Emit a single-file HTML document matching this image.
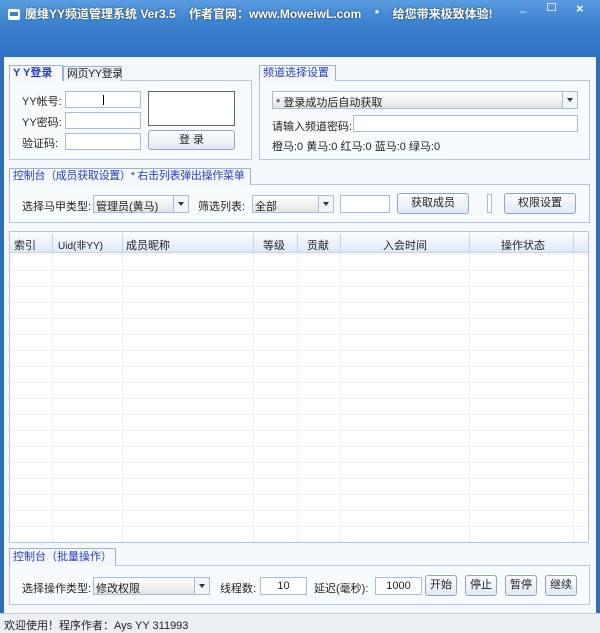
<!DOCTYPE html>
<html><head><meta charset="utf-8"><style>
*{box-sizing:border-box;margin:0;padding:0}
body{width:600px;height:633px;overflow:hidden;font-family:"Liberation Sans","Noto Sans CJK SC",sans-serif;font-size:11px;color:#222;background:#2d6fb8;position:relative;white-space:nowrap}
.a{position:absolute}
.title{left:0;top:0;width:600px;height:58px;background:linear-gradient(180deg,#5a9ce0 0%,#3d82d0 40%,#2f70c0 100%)}
.title .t{left:25px;top:5px;color:#fff;font-weight:bold;font-size:12px;white-space:nowrap;text-shadow:0 0 2px #234}
.body{left:4px;top:57px;width:592px;height:556px;background:#f4f8fc}
.tab{background:#f4f8fc;border:1px solid #9db3cc;border-bottom:none;color:#2a3cbf;padding-left:3px;line-height:15px;font-size:11px;overflow:hidden}
.panel{border:1px solid #b7c6d8;background:#f8fbfe}
.in{background:#fff;border:1px solid #a8bcd2}
.btn{border:1px solid #8fa6c1;border-radius:3px;background:linear-gradient(#fbfcfe,#e3eaf3);text-align:center;line-height:18px}
.lbl{white-space:nowrap}
.combo{border:1px solid #a8bcd2;background:linear-gradient(#fff,#e4e4e4)}
.dd{position:absolute;right:0;top:0;width:15px;height:100%;border-left:1px solid #a8bcd2;background:#f2f5f9}
.dd:after{content:"";position:absolute;left:4px;top:6px;border:3px solid transparent;border-top:4px solid #333}
.status{left:0;top:613px;width:600px;height:20px;background:#eceff3;border-top:1px solid #c7ccd3;padding:3px 4px;font-size:11px}
</style></head><body>
<div class="a title"><div class="a" style="left:8px;top:9px;width:12px;height:11px;background:#fff;border-radius:2px"><div style="margin:3px 2px;height:4px;background:#3a7fd6"></div></div>
<div class="a t">魔维YY频道管理系统 Ver3.5&nbsp;&nbsp;&nbsp; 作者官网：www.MoweiwL.com&nbsp;&nbsp;&nbsp; *&nbsp;&nbsp;&nbsp; 给您带来极致体验!</div>
<div class="a" style="left:520px;top:4px;color:#dde;font-size:12px">–</div>
<div class="a" style="left:547px;top:3px;width:9px;height:8px;border:1px solid #dde"></div>
<div class="a" style="left:576px;top:1px;color:#fff;font-size:13px;font-weight:bold">×</div>
</div>
<div class="a body"></div>

<div class="a panel" style="left:9px;top:80px;width:243px;height:80px"></div>
<div class="a tab" style="left:9px;top:65px;width:54px;height:16px;font-weight:bold">Y Y登录</div>
<div class="a tab" style="left:63px;top:66px;width:59px;height:15px;color:#222;background:#eef2f7;letter-spacing:-0.5px">网页YY登录</div>
<div class="a lbl" style="left:22px;top:93px">YY帐号:</div>
<div class="a lbl" style="left:22px;top:114px">YY密码:</div>
<div class="a lbl" style="left:22px;top:135px">验证码:</div>
<div class="a in" style="left:65px;top:91px;width:76px;height:17px"><div class="a" style="left:37px;top:3px;width:1px;height:10px;background:#000"></div></div>
<div class="a in" style="left:65px;top:112px;width:76px;height:17px"></div>
<div class="a in" style="left:65px;top:133px;width:76px;height:17px"></div>
<div class="a in" style="left:148px;top:91px;width:87px;height:35px;border-color:#666"></div>
<div class="a btn" style="left:148px;top:130px;width:87px;height:20px">登 录</div>

<div class="a panel" style="left:259px;top:80px;width:331px;height:80px"></div>
<div class="a tab" style="left:259px;top:65px;width:77px;height:16px">频道选择设置</div>
<div class="a combo" style="left:272px;top:91px;width:306px;height:18px"><span style="position:absolute;left:3px;top:2px">* 登录成功后自动获取</span><div class="dd"></div></div>
<div class="a lbl" style="left:272px;top:118px">请输入频道密码:</div>
<div class="a in" style="left:353px;top:115px;width:225px;height:17px"></div>
<div class="a lbl" style="left:272px;top:138px;font-size:11px">橙马:0 黄马:0 红马:0 蓝马:0 绿马:0</div>

<div class="a panel" style="left:9px;top:184px;width:581px;height:39px"></div>
<div class="a tab" style="left:9px;top:168px;width:242px;height:17px;letter-spacing:-0.3px">控制台（成员获取设置）* 右击列表弹出操作菜单</div>
<div class="a lbl" style="left:22px;top:198px">选择马甲类型:</div>
<div class="a combo" style="left:93px;top:195px;width:96px;height:18px"><span style="position:absolute;left:2px;top:2px">管理员(黄马)</span><div class="dd"></div></div>
<div class="a lbl" style="left:198px;top:198px">筛选列表:</div>
<div class="a combo" style="left:252px;top:195px;width:82px;height:18px"><span style="position:absolute;left:2px;top:2px">全部</span><div class="dd"></div></div>
<div class="a in" style="left:340px;top:195px;width:50px;height:18px"></div>
<div class="a btn" style="left:397px;top:193px;width:72px;height:21px">获取成员</div>
<div class="a" style="left:487px;top:194px;width:5px;height:19px;border:1px solid #a8bcd2;background:#fff"></div>
<div class="a btn" style="left:504px;top:193px;width:72px;height:21px">权限设置</div>

<div class="a" style="left:9px;top:231px;width:580px;height:312px;background:#fff;border:1px solid #b7c6d8;
background-image:linear-gradient(#eef1f5 1px,transparent 1px);background-size:100% 16px;background-position:0 22px"></div>
<div class="a" style="left:10px;top:232px;width:578px;height:21px;background:linear-gradient(#fdfeff,#dde9f6);border-bottom:1px solid #c4d3e4"></div>
<svg class="a" style="left:9px;top:234px" width="580" height="308"><g stroke="#c4d3e4"><line x1="43.5" y1="0" x2="43.5" y2="18"/><line x1="113.5" y1="0" x2="113.5" y2="18"/><line x1="244.5" y1="0" x2="244.5" y2="18"/><line x1="288.5" y1="0" x2="288.5" y2="18"/><line x1="331.5" y1="0" x2="331.5" y2="18"/><line x1="460.5" y1="0" x2="460.5" y2="18"/><line x1="564.5" y1="0" x2="564.5" y2="18"/></g>
<g stroke="#eef1f5"><line x1="43.5" y1="19" x2="43.5" y2="308"/><line x1="113.5" y1="19" x2="113.5" y2="308"/><line x1="244.5" y1="19" x2="244.5" y2="308"/><line x1="288.5" y1="19" x2="288.5" y2="308"/><line x1="331.5" y1="19" x2="331.5" y2="308"/><line x1="460.5" y1="19" x2="460.5" y2="308"/><line x1="564.5" y1="19" x2="564.5" y2="308"/></g></svg>
<div class="a lbl" style="left:14px;top:237px">索引</div>
<div class="a lbl" style="left:58px;top:237px;font-size:10px">Uid(非YY)</div>
<div class="a lbl" style="left:126px;top:237px">成员昵称</div>
<div class="a lbl" style="left:263px;top:237px">等级</div>
<div class="a lbl" style="left:307px;top:237px">贡献</div>
<div class="a lbl" style="left:383px;top:237px">入会时间</div>
<div class="a lbl" style="left:501px;top:237px">操作状态</div>

<div class="a panel" style="left:9px;top:565px;width:581px;height:40px"></div>
<div class="a tab" style="left:9px;top:548px;width:107px;height:18px;line-height:16px">控制台（批量操作）</div>
<div class="a lbl" style="left:22px;top:580px">选择操作类型:</div>
<div class="a combo" style="left:93px;top:577px;width:117px;height:18px"><span style="position:absolute;left:2px;top:2px">修改权限</span><div class="dd"></div></div>
<div class="a lbl" style="left:220px;top:580px">线程数:</div>
<div class="a in" style="left:260px;top:577px;width:47px;height:18px;text-align:center;line-height:16px">10</div>
<div class="a lbl" style="left:314px;top:580px">延迟(毫秒):</div>
<div class="a in" style="left:375px;top:577px;width:47px;height:18px;text-align:center;line-height:16px">1000</div>
<div class="a btn" style="left:425px;top:575px;width:32px;height:21px">开始</div>
<div class="a btn" style="left:465px;top:575px;width:32px;height:21px">停止</div>
<div class="a btn" style="left:505px;top:575px;width:32px;height:21px">暂停</div>
<div class="a btn" style="left:545px;top:575px;width:32px;height:21px">继续</div>

<div class="a status">欢迎使用！程序作者：Ays YY 311993</div>
</body></html>
